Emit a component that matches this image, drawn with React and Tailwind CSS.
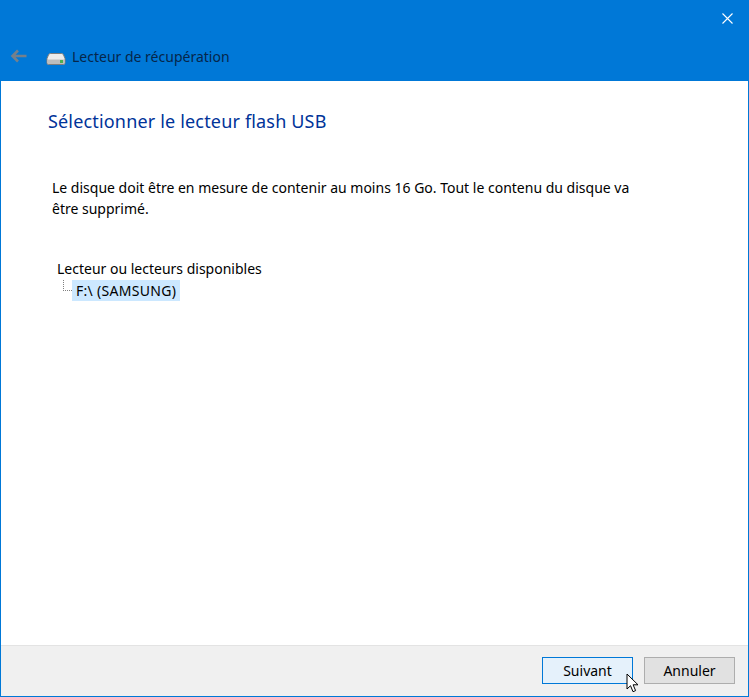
import React from "react";

function DriveIcon() {
  return (
    <svg width="20" height="14" viewBox="0 0 20 14" className="mt-[4px] shrink-0">
      <path d="M4.5 1.5h11c1 0 1.500 .5 2 1.300l1.500 3.700v4.500a1.500 1.500 0 0 1-1.500 1.500h-15A1.500 1.500 0 0 1 1 11V6.500l1.500-3.700c.5-.8 1-1.300 2-1.300z" fill="#ececec" stroke="#7d7d7d" />
      <path d="M1.500 7.500h17v3.500a1 1 0 0 1-1 1h-15a1 1 0 0 1-1-1z" fill="#bdbdbd" />
      <rect x="14" y="8" width="3" height="3" fill="#4caf50" />
    </svg>
  );
}

export default function App() {
  return (
    <div className="w-[749px] h-[697px] flex flex-col bg-white border border-[#0078d7] relative text-black" style={{ fontFamily: '"Noto Sans", sans-serif' }}>
      {/* Title bar */}
      <div className="h-[80px] bg-[#0078d7] flex flex-col shrink-0">
        <div className="flex justify-end pt-[12px] pr-[15px] h-[44px]">
          <svg width="11" height="11" viewBox="0 0 11 11">
            <path d="M0.5 0.500l10 10M10.500 0.500l-10 10" stroke="#ffffff" strokeWidth="1.100" fill="none" />
          </svg>
        </div>
        <div className="flex items-center pl-[9px] h-[24px]">
          <svg width="18" height="14" viewBox="0 0 18 14" className="shrink-0 -mt-[2px]">
            <path d="M8 1.500L2.500 7 8 12.500M2.500 7H16.500" stroke="#75808c" strokeWidth="2.600" fill="none" />
          </svg>
          <div className="ml-[18px] flex items-center gap-[6px]">
            <DriveIcon />
            <span className="text-[14px] text-[#06264a] leading-[20px]">Lecteur de récupération</span>
          </div>
        </div>
      </div>

      {/* Content */}
      <div className="flex-1 pl-[47px] pt-[26px]">
        <h1 className="text-[18px] leading-[28px] text-[#003399] tracking-[0.17px]">Sélectionner le lecteur flash USB</h1>
        <p className="mt-[42px] ml-[4px] w-[590px] text-[14px] leading-[21px]">
          Le disque doit être en mesure de contenir au moins 16 Go. Tout le contenu du disque va être supprimé.
        </p>
        <div className="mt-[39px] ml-[9px] text-[14px] leading-[21px]">
          <div>Lecteur ou lecteurs disponibles</div>
          <div className="flex items-start h-[22px] pt-[1px]">
            <div className="ml-[6px] w-[9px] h-[11px] border-l border-b border-dotted border-[#808080]" />
            <span className="bg-[#cce8ff] px-[4px] h-[21px] tracking-[0.3px]">F:\ (SAMSUNG)</span>
          </div>
        </div>
      </div>

      {/* Footer */}
      <div className="h-[51px] shrink-0 bg-[#f0f0f0] border-t border-[#e3e3e3] flex justify-end items-start gap-[11px] pt-[11px] pr-[13px]">
        <button className="w-[91px] h-[27px] bg-[#e5f1fb] border-[1.5px] border-[#0078d7] text-[14px] leading-[24px] text-center">Suivant</button>
        <button className="w-[91px] h-[27px] bg-[#e1e1e1] border-[1.5px] border-[#adadad] text-[14px] leading-[24px] text-center">Annuler</button>
      </div>

      {/* Mouse pointer */}
      <svg width="14" height="21" viewBox="0 0 14 21" className="absolute left-[625px] top-[672px]">
        <path d="M1 1v15l3.500-3.300 2.500 6 2.600-1.100-2.500-5.800H12z" fill="#fff" stroke="#000" strokeWidth="1" strokeLinejoin="miter" />
      </svg>
    </div>
  );
}
